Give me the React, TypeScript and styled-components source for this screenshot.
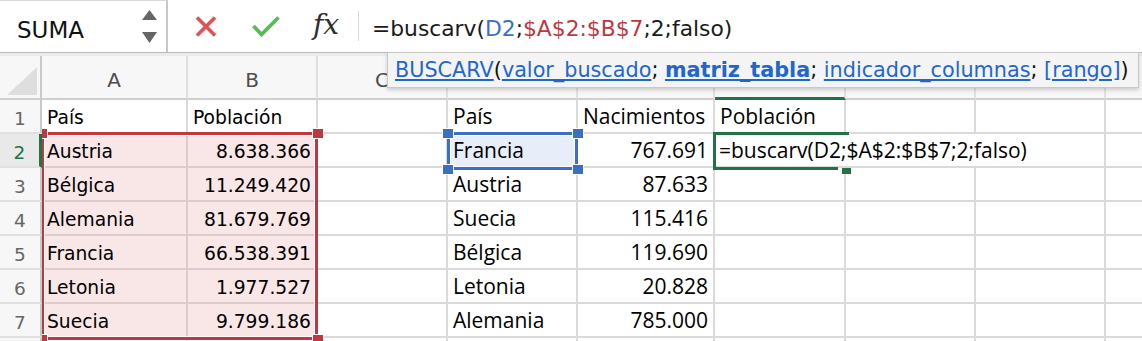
import React from 'react';
import styled, { createGlobalStyle, css } from 'styled-components';

const RED = '#c1373f';
const BLUE = '#3b6fc4';
const GREEN = '#217346';
const LINE = '#dadada';

const GlobalStyle = createGlobalStyle`
  html, body { margin: 0; padding: 0; background: #fff; }
  body { font-family: "DejaVu Sans", sans-serif; overflow: hidden; }
  *, *::before, *::after { box-sizing: border-box; }
`;

const Page = styled.div`
  position: relative;
  width: 1142px;
  height: 341px;
  overflow: hidden;
  background: #fff;
`;

/* ---------- formula bar ---------- */
const FormulaBar = styled.div`
  display: flex;
  align-items: stretch;
  height: 53px;
  border-bottom: 1px solid #b9b9b9;
  background: #fff;
`;

const NameBox = styled.div`
  width: 168px;
  flex: none;
  display: flex;
  align-items: center;
  justify-content: space-between;
  padding: 0 9px 0 17px;
  border-top: 1px solid #d9d9d9;
  border-right: 2px solid #c8c8c8;
  font: 23px "DejaVu Sans", sans-serif;
  color: #111;
`;

const NameText = styled.span`
  padding-top: 6px;
`;

const Tools = styled.div`
  display: flex;
  align-items: center;
  padding-left: 8px;
`;

const ToolButton = styled.div`
  width: 60px;
  height: 100%;
  display: flex;
  align-items: center;
  justify-content: center;
`;

const Fx = styled.span`
  font: italic 28px "DejaVu Serif", serif;
  color: #2e2e2e;
  margin-top: -3px;
`;

const Divider = styled.div`
  align-self: center;
  width: 1px;
  height: 30px;
  margin-left: 2px;
  background: #d8d8d8;
`;

const FormulaText = styled.div`
  display: flex;
  align-items: center;
  padding: 5px 0 0 13px;
  font: 21.8px "DejaVu Sans", sans-serif;
  color: #1a1a1a;
  white-space: nowrap;
`;

const Ref = styled.span<{ $color: string }>`
  color: ${p => p.$color};
`;

const Strip = styled.div`
  height: 3px;
  background: #ebebeb;
`;

/* ---------- sheet ---------- */
const Sheet = styled.div`
  display: grid;
  grid-template-columns: 42px 146px 130px 130px 130px 137px 131px 130px 130px 130px;
  grid-template-rows: 44px repeat(8, 34px);
`;

const CornerCell = styled.div`
  grid-column: 1;
  grid-row: 1;
  display: flex;
  align-items: flex-end;
  justify-content: flex-end;
  padding: 0 3px 3px 0;
  background: #f7f7f7;
  border-right: 2px solid #c9c9c9;
  border-bottom: 2px solid #cfcfcf;
`;

const CornerTriangle = styled.div`
  width: 30px;
  height: 28px;
  background: #dedede;
  clip-path: polygon(100% 0, 100% 100%, 0 100%);
`;

const ColHeader = styled.div<{ $col: number; $active?: boolean }>`
  grid-row: 1;
  grid-column: ${p => p.$col};
  display: flex;
  align-items: center;
  justify-content: center;
  padding-top: 6px;
  background: #f7f7f7;
  border-right: 2px solid #e0e0e0;
  border-bottom: 2px solid #cfcfcf;
  font: 20px "DejaVu Sans", sans-serif;
  color: #4d4d4d;
  ${p =>
    p.$active &&
    css`
      border-bottom: 3px solid ${GREEN};
    `}
`;

const RowHeader = styled.div<{ $row: number; $active?: boolean }>`
  grid-column: 1;
  grid-row: ${p => p.$row};
  position: relative;
  z-index: 3;
  display: flex;
  align-items: center;
  justify-content: center;
  padding-top: 4px;
  background: ${p => (p.$active ? '#e9e9e9' : '#f7f7f7')};
  border-right: ${p => (p.$active ? `3px solid ${GREEN}` : '2px solid #c9c9c9')};
  border-bottom: 2px solid #e0e0e0;
  color: ${p => (p.$active ? GREEN : '#666')};
  font: 18.5px "DejaVu Sans", sans-serif;
`;

type Tint = 'red' | 'blue' | undefined;

const Cell = styled.div<{
  $row: number;
  $col: number;
  $font: 'mac' | 'win';
  $right?: boolean;
  $tint?: Tint;
  $raised?: boolean;
}>`
  grid-row: ${p => p.$row};
  grid-column: ${p => p.$col};
  display: flex;
  align-items: center;
  justify-content: ${p => (p.$right ? 'flex-end' : 'flex-start')};
  min-width: 0;
  white-space: nowrap;
  color: #000;
  background: ${p => (p.$tint === 'red' ? '#f9e7e8' : p.$tint === 'blue' ? '#e8eef9' : 'transparent')};
  border-right: 2px solid ${p => (p.$tint === 'red' ? '#dccbcc' : LINE)};
  border-bottom: 2px solid ${p => (p.$tint === 'red' ? '#dccbcc' : LINE)};
  ${p =>
    p.$font === 'mac'
      ? css`
          padding: 3px 5px 0 5px;
          font: 18.7px "DejaVu Sans", sans-serif;
        `
      : css`
          padding: 0 5px 0 5px;
          font: 21px "Open Sans", sans-serif;
        `}
  ${p =>
    p.$raised &&
    css`
      position: relative;
      z-index: 1;
      overflow: visible;
      padding-left: 4px;
    `}
`;

const EditorText = styled.span`
  align-self: stretch;
  display: flex;
  align-items: center;
  padding-right: 6px;
  background: #fff;
`;

/* ---------- overlays ---------- */
const RangeLayer = styled.div<{ $area: string }>`
  grid-area: ${p => p.$area};
  position: relative;
  z-index: 2;
  pointer-events: none;
`;

const RangeFrame = styled.div<{ $color: string }>`
  position: absolute;
  top: -2px;
  left: -1px;
  right: 0;
  bottom: -2px;
  border: 3px solid ${p => p.$color};
  box-shadow: inset 0 0 0 1px rgba(255, 255, 255, 0.9);
`;

type CornerPos = 'tl' | 'tr' | 'bl' | 'br';

const Handle = styled.div<{ $color: string; $at: CornerPos }>`
  position: absolute;
  width: 10px;
  height: 9px;
  background: ${p => p.$color};
  box-shadow: 0 0 0 1px #fff;
  ${p => (p.$at[0] === 't' ? 'top: -5px;' : 'bottom: -6px;')}
  ${p => (p.$at[1] === 'l' ? 'left: -5px;' : 'right: -5px;')}
`;

const ActiveBar = styled.div<{ $side: 'top' | 'left' | 'bottom' }>`
  position: absolute;
  background: ${GREEN};
  ${p =>
    p.$side === 'top'
      ? css`
          top: -2px;
          left: -2px;
          right: -3px;
          height: 3px;
        `
      : p.$side === 'left'
      ? css`
          top: -2px;
          bottom: -2px;
          left: -2px;
          width: 3px;
        `
      : css`
          bottom: -2px;
          left: -2px;
          right: 8px;
          height: 3px;
        `}
`;

const FillHandle = styled.div`
  position: absolute;
  right: -5px;
  bottom: -6px;
  width: 9px;
  height: 6px;
  background: ${GREEN};
`;

/* ---------- tooltip ---------- */
const Tooltip = styled.div`
  position: absolute;
  left: 387px;
  top: 52px;
  height: 36px;
  z-index: 10;
  display: flex;
  align-items: center;
  padding: 0 9px 0 7px;
  background: #f4f4f4;
  border: 1px solid #c8c8c8;
  box-shadow: 0 2px 4px rgba(0, 0, 0, 0.18);
  font: 20.75px "DejaVu Sans", sans-serif;
  color: #111;
  white-space: pre;
`;

const ArgLink = styled.span<{ $bold?: boolean }>`
  color: #1f66d1;
  text-decoration: underline;
  text-underline-offset: 2px;
  font-weight: ${p => (p.$bold ? 700 : 400)};
`;

/* ---------- icons ---------- */
const CancelIcon = () => (
  <svg width="22" height="21" viewBox="0 0 22 21">
    <path d="M2 1.5 L20 19.5 M20 1.5 L2 19.5" stroke="#e05353" strokeWidth="3.6" fill="none" />
  </svg>
);

const ConfirmIcon = () => (
  <svg width="28" height="21" viewBox="0 0 28 21">
    <path d="M1.5 10 L9.5 18.5 L26.5 1.5" stroke="#5cb85c" strokeWidth="3.8" fill="none" />
  </svg>
);

const SpinnerIcon = () => (
  <svg width="15" height="33" viewBox="0 0 15 33">
    <polygon points="0,10 15,10 7.5,0" fill="#666" />
    <polygon points="0,22 15,22 7.5,33" fill="#666" />
  </svg>
);

/* ---------- data ---------- */
const COLS = ['A', 'B', 'C', 'D', 'E', 'F', 'G', 'H', 'I'];
const VISIBLE_LETTERS = 8; // column I lies past the window edge

const leftTable: [string, string][] = [
  ['País', 'Población'],
  ['Austria', '8.638.366'],
  ['Bélgica', '11.249.420'],
  ['Alemania', '81.679.769'],
  ['Francia', '66.538.391'],
  ['Letonia', '1.977.527'],
  ['Suecia', '9.799.186'],
];

const rightTable: [string, string, string][] = [
  ['País', 'Nacimientos', 'Población'],
  ['Francia', '767.691', ''],
  ['Austria', '87.633', ''],
  ['Suecia', '115.416', ''],
  ['Bélgica', '119.690', ''],
  ['Letonia', '20.828', ''],
  ['Alemania', '785.000', ''],
];

const FORMULA = '=buscarv(D2;$A$2:$B$7;2;falso)';

export default function App() {
  const rows = [1, 2, 3, 4, 5, 6, 7, 8];

  const cells: React.ReactNode[] = [];
  rows.forEach(r => {
    const gridRow = r + 1;
    cells.push(
      <RowHeader key={`rh${r}`} $row={gridRow} $active={r === 2}>
        {r <= 7 ? r : ''}
      </RowHeader>
    );
    COLS.forEach((_, ci) => {
      const gridCol = ci + 2;
      const key = `c${r}-${ci}`;
      const lt = leftTable[r - 1];
      const rt = rightTable[r - 1];
      if (ci === 0 || ci === 1) {
        const tint: Tint = r >= 2 && r <= 7 ? 'red' : undefined;
        const text = lt ? lt[ci] : '';
        const right = ci === 1 && r > 1;
        cells.push(
          <Cell key={key} $row={gridRow} $col={gridCol} $font="mac" $right={right} $tint={tint}>
            {text}
          </Cell>
        );
      } else if (ci >= 3 && ci <= 5) {
        const text = rt ? rt[ci - 3] : '';
        const right = ci === 4 && r > 1;
        const tint: Tint = ci === 3 && r === 2 ? 'blue' : undefined;
        const editing = ci === 5 && r === 2;
        cells.push(
          <Cell
            key={key}
            $row={gridRow}
            $col={gridCol}
            $font="win"
            $right={right}
            $tint={tint}
            $raised={editing}
          >
            {editing ? <EditorText>{FORMULA}</EditorText> : text}
          </Cell>
        );
      } else {
        cells.push(<Cell key={key} $row={gridRow} $col={gridCol} $font="win" />);
      }
    });
  });

  return (
    <Page>
      <GlobalStyle />
      <FormulaBar>
        <NameBox>
          <NameText>SUMA</NameText>
          <SpinnerIcon />
        </NameBox>
        <Tools>
          <ToolButton>
            <CancelIcon />
          </ToolButton>
          <ToolButton>
            <ConfirmIcon />
          </ToolButton>
          <ToolButton>
            <Fx>fx</Fx>
          </ToolButton>
        </Tools>
        <Divider />
        <FormulaText>
          =buscarv(<Ref $color={BLUE}>D2</Ref>;<Ref $color={RED}>$A$2:$B$7</Ref>;2;falso)
        </FormulaText>
      </FormulaBar>
      <Strip />
      <Sheet>
        <CornerCell>
          <CornerTriangle />
        </CornerCell>
        {COLS.map((c, i) => (
          <ColHeader key={c} $col={i + 2} $active={c === 'F'}>
            {i < VISIBLE_LETTERS ? c : ''}
          </ColHeader>
        ))}
        {cells}

        <RangeLayer $area="3 / 2 / 9 / 4">
          <RangeFrame $color={RED} />
          <Handle $color={RED} $at="tl" />
          <Handle $color={RED} $at="tr" />
          <Handle $color={RED} $at="bl" />
          <Handle $color={RED} $at="br" />
        </RangeLayer>

        <RangeLayer $area="3 / 5 / 4 / 6">
          <RangeFrame $color={BLUE} />
          <Handle $color={BLUE} $at="tl" />
          <Handle $color={BLUE} $at="tr" />
          <Handle $color={BLUE} $at="bl" />
          <Handle $color={BLUE} $at="br" />
        </RangeLayer>

        <RangeLayer $area="3 / 7 / 4 / 8">
          <ActiveBar $side="top" />
          <ActiveBar $side="left" />
          <ActiveBar $side="bottom" />
          <FillHandle />
        </RangeLayer>
      </Sheet>

      <Tooltip>
        <ArgLink>BUSCARV</ArgLink>
        {'('}
        <ArgLink>valor_buscado</ArgLink>
        {'; '}
        <ArgLink $bold>matriz_tabla</ArgLink>
        {'; '}
        <ArgLink>indicador_columnas</ArgLink>
        {'; '}
        <ArgLink>[rango]</ArgLink>
        {')'}
      </Tooltip>
    </Page>
  );
}
